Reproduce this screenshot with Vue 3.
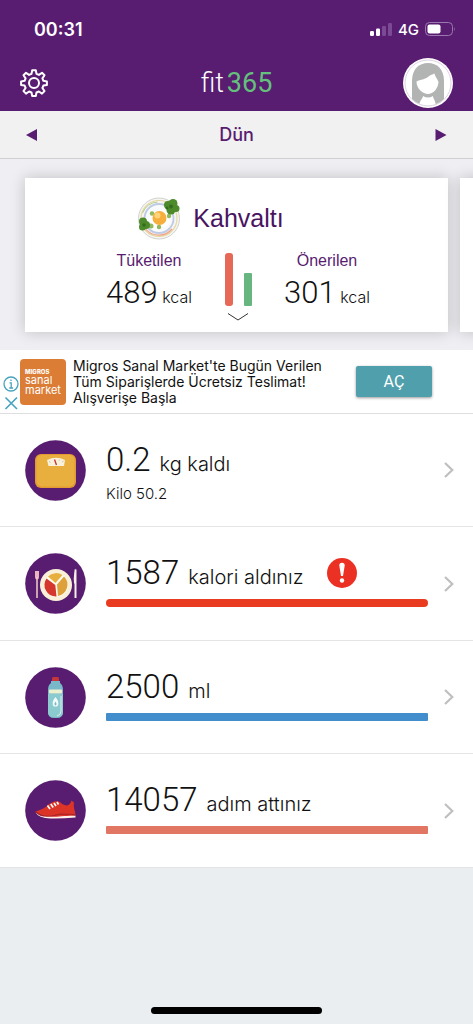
<script setup>
const meals = [
  { name: 'Kahvaltı', consumed: 489, suggested: 301 },
]

const rows = [
  { id: 'weight', value: '0.2', unit: 'kg kaldı', note: 'Kilo 50.2' },
  { id: 'calories', value: '1587', unit: 'kalori aldınız', alert: true, tone: 'red' },
  { id: 'water', value: '2500', unit: 'ml', tone: 'blue' },
  { id: 'steps', value: '14057', unit: 'adım attınız', tone: 'coral' },
]

const barHeight = (value) => Math.round((value / 489) * 53) + 'px'
</script>

<template>
  <div class="screen">
    <header class="top">
      <div class="status">
        <span class="clock">00:31</span>
        <div class="indicators">
          <svg width="22" height="13" viewBox="0 0 22 13" aria-hidden="true">
            <rect x="0" y="8" width="4" height="5" rx="1.2" fill="#fff" />
            <rect x="6" y="5.500" width="4" height="7.500" rx="1.200" fill="#fff" />
            <rect x="12" y="3" width="4" height="10" rx="1.200" fill="#7a4a94" />
            <rect x="18" y="0" width="4" height="13" rx="1.200" fill="#7a4a94" />
          </svg>
          <span class="network">4G</span>
          <svg width="31" height="14" viewBox="0 0 31 14" aria-hidden="true">
            <rect x="0.500" y="0.500" width="27" height="13" rx="4" fill="none" stroke="#9a78ad" />
            <rect x="2.500" y="2.500" width="13" height="9" rx="2" fill="#fff" />
            <path d="M29 5 Q30.600 7 29 9.200 Z" fill="#9a78ad" />
          </svg>
        </div>
      </div>
      <div class="nav">
        <button class="plain gear" aria-label="Ayarlar">
          <svg width="28" height="28" viewBox="0 0 28 28" fill="none" stroke="#fff" stroke-width="2" stroke-linejoin="round">
            <path d="M12.200 1.200h3.600l.7 3.700 2.400 1 3.100-2.100 2.500 2.500-2.100 3.100 1 2.400 3.500.6v3.500l-3.500.7-1 2.400 2.100 3.100-2.500 2.500-3.100-2.100-2.400 1-.7 3.500h-3.600l-.7-3.500-2.400-1L6 24.600 3.500 22.100 5.600 19l-1-2.400-3.500-.7v-3.500l3.500-.6 1-2.400-2.100-3.100L6 3.800l3.100 2.100 2.400-1z" />
            <circle cx="14" cy="14" r="5" />
          </svg>
        </button>
        <h1 class="logo">fit<span>365</span></h1>
        <button class="plain avatar" aria-label="Profil">
          <svg width="50" height="50" viewBox="0 0 50 50">
            <defs><clipPath id="face"><circle cx="25" cy="25" r="22.500" /></clipPath></defs>
            <circle cx="25" cy="25" r="25" fill="#fff" />
            <circle cx="25" cy="25" r="23" fill="#fff" stroke="#d4c6dc" stroke-width="0.800" />
            <g clip-path="url(#face)">
              <path d="M9 50V23C9 11 16 5 25 5s16 6 16 18v27z" fill="#b2b4b3" />
              <path d="M13.500 23.500c4-2 9-2 12-5 2-1.500 4-2 6-3 .5 3 2.500 5 4 8.500C35 31 30 36 25 36s-11.500-5-11.500-12.500z" fill="#fff" />
              <path d="M20 38q5 3 10 0c0 3 3 4 3 12H16c0-8 4-9 4-12z" fill="#fff" />
            </g>
          </svg>
        </button>
      </div>
    </header>

    <div class="day">
      <button class="plain arrow" aria-label="Önceki gün">
        <svg width="12" height="14" viewBox="0 0 12 14"><path d="M0 7 11 1v12z" fill="#581c70" /></svg>
      </button>
      <h2>Dün</h2>
      <button class="plain arrow" aria-label="Sonraki gün">
        <svg width="12" height="14" viewBox="0 0 12 14"><path d="M11.500 7 .5 1v12z" fill="#581c70" /></svg>
      </button>
    </div>

    <section class="meals">
      <article v-for="meal in meals" :key="meal.name" class="card">
        <div class="meal-title">
          <svg width="44" height="44" viewBox="0 0 44 44" aria-hidden="true">
            <circle cx="22" cy="22.500" r="20.500" fill="#f5f5f2" stroke="#d2d3d1" />
            <circle cx="22" cy="22.500" r="18" fill="none" stroke="#e8d8a4" stroke-width="1.200" />
            <path d="M8 32a17 17 0 0 0 27 1" fill="none" stroke="#efa184" stroke-width="1.200" />
            <path d="M5.500 17a18 18 0 0 1 15-11" fill="none" stroke="#b3cf91" />
            <circle cx="22" cy="22.500" r="14.500" fill="#f9fafb" stroke="#bfcbe4" stroke-width="1.800" />
            <path d="M14 19c3-5 6-1 9-4s8 0 8 5 4 5 0 9-7 0-10 4-6 0-8-3-3-6 1-11z" fill="#fff" />
            <g fill="#8fb95c"><circle cx="15" cy="17.500" r="2.200" /><circle cx="14" cy="30" r="2.500" /><circle cx="22" cy="31" r="2.200" /><circle cx="32" cy="20" r="2.200" /></g>
            <circle cx="22.500" cy="22" r="7" fill="#f6ae3d" />
            <circle cx="20.500" cy="19.500" r="3" fill="#ffd37b" />
            <g fill="#4c8a2b"><circle cx="31" cy="9" r="4" /><circle cx="36" cy="7.500" r="4.500" /><circle cx="39" cy="12.500" r="3.500" /><circle cx="34" cy="14" r="4.500" /><circle cx="6" cy="25.500" r="4" /><circle cx="9" cy="29" r="4" /><circle cx="5.500" cy="31" r="3.500" /></g>
            <g fill="#326d1d"><circle cx="34" cy="10.500" r="2" /><circle cx="30" cy="12" r="1.500" /><circle cx="7" cy="29" r="1.800" /></g>
          </svg>
          <h3>{{ meal.name }}</h3>
        </div>
        <div class="compare">
          <div class="figure">
            <span class="label">Tüketilen</span>
            <p><b>{{ meal.consumed }}</b> kcal</p>
          </div>
          <div class="middle">
            <div class="bars" aria-hidden="true">
              <i class="eaten" :style="{ height: barHeight(meal.consumed) }"></i>
              <i class="advised" :style="{ height: barHeight(meal.suggested) }"></i>
            </div>
            <button class="plain" aria-label="Detaylar">
              <svg width="22" height="8" viewBox="0 0 22 8" fill="none" stroke="#333"><path d="M1 .5 11 7 21 .5" /></svg>
            </button>
          </div>
          <div class="figure">
            <span class="label">Önerilen</span>
            <p><b>{{ meal.suggested }}</b> kcal</p>
          </div>
        </div>
      </article>
      <article class="card"></article>
    </section>

    <aside class="ad">
      <div class="ad-marks">
        <button class="plain" aria-label="Reklam bilgisi">
          <svg width="16" height="16" viewBox="0 0 16 16" fill="none" stroke="#46a3bd" stroke-width="1.300"><circle cx="8" cy="8" r="7" /><path d="M6.500 6.800H8.200V12M6.300 12h3.800M8 3.500v1.600" /></svg>
        </button>
        <button class="plain" aria-label="Reklamı kapat">
          <svg width="16" height="14" viewBox="0 0 16 14" fill="none" stroke="#46a3bd" stroke-width="1.600"><path d="M2.500 1.500 14 13M14 1.500 2.500 13" /></svg>
        </button>
      </div>
      <div class="brand"><strong>MIGROS</strong><span>sanal</span><span>market</span></div>
      <p class="ad-text">Migros Sanal Market'te Bugün Verilen<br>Tüm Siparişlerde Ücretsiz Teslimat!<br>Alışverişe Başla</p>
      <button class="open">AÇ</button>
    </aside>

    <main>
      <a v-for="row in rows" :key="row.id" class="row" href="#">
        <svg class="badge" width="61" height="61" viewBox="0 0 61 61" aria-hidden="true">
          <circle cx="30.500" cy="30.500" r="30.300" fill="#581c70" />
          <g v-if="row.id === 'weight'">
            <rect x="10" y="14" width="41" height="34" rx="6" fill="#e39a32" />
            <rect x="11.500" y="15" width="38" height="31.500" rx="5" fill="#e8ae3e" />
            <path d="M22 20q9-4.500 18 0l-1 6H23.500z" fill="#f8f1dc" />
            <path d="M29.500 19.500 31.500 25" stroke="#c63b31" stroke-width="1.400" />
            <path d="M24 21.500l1.500.8M37 22l1.500-.8M34 20.800l.4-1.300" stroke="#b9a789" stroke-width=".6" />
          </g>
          <g v-else-if="row.id === 'calories'">
            <circle cx="31" cy="32" r="16" fill="#f8f0d8" />
            <circle cx="31" cy="32" r="12" fill="#fffaf0" />
            <path d="M30.500 30 23 23.500a11.500 11.500 0 0 1 14.500-1.500z" fill="#e7ae40" />
            <path d="M32 31.500 39 23.500a11.500 11.500 0 0 1-6 19.500z" fill="#dda03b" />
            <path d="M30.300 32 31.500 43.500A11.500 11.500 0 0 1 21.500 25.500z" fill="#d5362d" />
            <path d="M10 18h4v6q0 2.500-2 2.500T10 24z" fill="#e9b7bd" />
            <path d="M12 24v21" stroke="#f2cfc6" stroke-width="1.500" />
            <path d="M50.500 16.500V45" stroke="#f8f0e8" stroke-width="2" />
            <path d="M51 15.500q-3 6-2 15h2z" fill="#f8f0e8" />
          </g>
          <g v-else-if="row.id === 'water'">
            <rect x="27" y="10" width="7" height="5" rx="1.500" fill="#c7373a" />
            <path d="M26 14h9v2q3 2 3 7v22q0 6-6 6h-3q-6 0-6-6V23q0-5 3-7z" fill="#79b8c8" />
            <path d="M23 27h15v18q0 5-6 5h-3q-6 0-6-5z" fill="#8bcbd0" />
            <rect x="24" y="22.500" width="13" height="4" rx="1" fill="#edf0cf" />
            <path d="M30.500 30q5 6 1.500 9.500h-3Q25.500 36 30.500 30z" fill="#f3fafa" />
            <path d="M30.500 34.500q2 3 0 4-2-1 0-4z" fill="#79b8c8" />
            <path d="M36 29v15q0 4-4 5" fill="none" stroke="#d8eeee" />
          </g>
          <g v-else>
            <path d="M10.500 31.500c5-1.500 10-3.500 13.500-7.500l5-2.500q4-.5 6 .5 2 3 6 3.500 4 0 5.500-5l2.500 2c-1 6 1.500 8 1.500 13l-10 1.200-15 .5q-11-.2-15-5.700z" fill="#dc3528" />
            <path d="M10.500 31.500q5 5.500 15 4.800l10-2.300 15 .5" fill="none" stroke="#a82427" stroke-width="1.200" />
            <path d="M10.500 32.500c4 4 9 4.700 14 4.200 7 .5 14-1.200 26-1v1.800q-14 1.200-25 .9-12-.4-15-5.900z" fill="#fff0e8" />
            <path d="M22.500 25.500l2.500 3.500M25.800 24l2.400 3.500M29 23l2 3M32 22l1.500 2.500" stroke="#fff" stroke-width="1.600" />
          </g>
        </svg>
        <div class="info">
          <div class="headline">
            <span class="value">{{ row.value }}</span>
            <span class="unit">{{ row.unit }}</span>
            <svg v-if="row.alert" class="alert" width="30" height="30" viewBox="0 0 30 30" role="img" aria-label="Uyarı">
              <circle cx="15" cy="15" r="15" fill="#ea3124" />
              <path d="M12.300 7.500q0-2.800 2.700-2.800t2.700 2.800L16 18h-2z" fill="#fff" />
              <circle cx="15" cy="22.500" r="2.200" fill="#fff" />
            </svg>
          </div>
          <span v-if="row.note" class="note">{{ row.note }}</span>
          <div v-else class="track" :class="row.tone"></div>
        </div>
        <svg class="chevron" width="10" height="16" viewBox="0 0 10 16" fill="none" stroke="#bfbfbf" stroke-width="2.200"><path d="M1 1 8.300 8 1 15" /></svg>
      </a>
    </main>

    <footer class="home"><i></i></footer>
  </div>
</template>

<style>
body {
  margin: 0;
  background: #ebeef0;
}
</style>

<style scoped>
.screen {
  display: flex;
  flex-direction: column;
  min-height: 100vh;
  background: #ebeef0;
  color: #111;
  font-family: Inter, "Liberation Sans", sans-serif;
}

h1, h2, h3, p {
  margin: 0;
  font-weight: 400;
}

.plain {
  display: flex;
  padding: 0;
  border: 0;
  background: none;
}

svg {
  display: block;
  flex: none;
}

.top {
  background: #581c70;
  color: #fff;
}

.status {
  display: flex;
  align-items: center;
  justify-content: space-between;
  box-sizing: border-box;
  height: 55px;
  padding: 3px 17px 0 34px;
}

.clock {
  font-size: 18px;
  font-weight: 600;
}

.indicators {
  display: flex;
  align-items: center;
  gap: 6px;
}

.network {
  font-size: 15px;
  font-weight: 500;
}

.nav {
  display: grid;
  grid-template-columns: 1fr auto 1fr;
  align-items: center;
  height: 56px;
  padding: 0 20px;
}

.avatar {
  justify-self: end;
}

.logo {
  display: flex;
  gap: 3px;
  font-family: Roboto, sans-serif;
  font-size: 27px;
  font-weight: 300;
  line-height: 36px;
}

.logo span {
  color: #64c07c;
  font-weight: 400;
}

.day {
  display: flex;
  align-items: center;
  justify-content: space-between;
  height: 47px;
  padding: 0 26px;
  border-bottom: 1px solid #cfcfd2;
  background: #f1f1f1;
}

.day h2 {
  color: #581c70;
  font-size: 18px;
  font-weight: 500;
}

.meals {
  display: flex;
  gap: 12px;
  padding: 19px 25px 18px;
  overflow: hidden;
  background: #efeff3;
}

.card {
  flex: 0 0 100%;
  display: flex;
  flex-direction: column;
  align-items: center;
  box-sizing: border-box;
  min-height: 154px;
  padding-top: 18px;
  background: #fff;
  box-shadow: 0 0 14px rgba(0, 0, 0, 0.2);
}

.meal-title {
  display: flex;
  align-items: center;
  gap: 12px;
  margin-right: 52px;
}

.meal-title h3 {
  color: #48145f;
  font-family: "Liberation Sans", sans-serif;
  font-size: 25px;
}

.compare {
  display: grid;
  grid-template-columns: 110px 28px 110px;
  justify-content: center;
  column-gap: 20px;
  margin-top: 12px;
  padding-left: 3px;
}

.figure {
  display: flex;
  flex-direction: column;
  align-items: center;
  white-space: nowrap;
}

.label {
  color: #581c70;
  font-family: "Liberation Sans", sans-serif;
  font-size: 16px;
  line-height: 18px;
}

.figure p {
  font-size: 16px;
  font-weight: 300;
  line-height: 46px;
}

.figure b {
  font-family: Roboto, sans-serif;
  font-size: 31px;
  font-weight: 300;
}

.middle {
  display: flex;
  flex-direction: column;
  align-items: center;
  gap: 7px;
}

.bars {
  display: flex;
  align-items: flex-end;
  gap: 11px;
  height: 54px;
}

.bars i {
  width: 8px;
}

.eaten {
  border-radius: 3px;
  background: #e66957;
}

.advised {
  border-radius: 1px;
  background: #67b680;
}

.ad {
  display: flex;
  align-items: center;
  height: 63px;
  padding: 0 41px 0 3px;
  border-bottom: 1px solid #dedee0;
  background: #fff;
}

.ad-marks {
  display: flex;
  flex-direction: column;
  gap: 4px;
  align-self: flex-end;
  padding-bottom: 3px;
}

.brand {
  display: flex;
  flex: none;
  flex-direction: column;
  justify-content: center;
  box-sizing: border-box;
  width: 46px;
  height: 46px;
  margin-left: 1px;
  padding-left: 5px;
  border-radius: 4px;
  background: #dc7d36;
  color: #fff;
  font-size: 11px;
  line-height: 10px;
}

.brand strong {
  font-size: 6px;
  font-weight: 800;
  line-height: 7px;
}

.ad-text {
  margin-left: 7px;
  font-size: 14px;
  line-height: 16px;
  white-space: nowrap;
}

.open {
  width: 76px;
  height: 31px;
  margin-left: auto;
  padding: 0;
  border: 0;
  border-radius: 2px;
  background: #509fad;
  box-shadow: 0 1px 3px rgba(0, 0, 0, 0.4);
  color: #fff;
  font-family: Roboto, sans-serif;
  font-size: 16px;
}

.row {
  display: flex;
  align-items: center;
  box-sizing: border-box;
  min-height: 113px;
  padding: 0 19px 0 25px;
  border-bottom: 1px solid #e4e4e6;
  background: #fff;
  color: inherit;
  text-decoration: none;
}

.row:nth-child(even) {
  min-height: 114px;
}

.info {
  flex: 1;
  align-self: flex-start;
  margin: 0 16px 0 20px;
  padding-top: 26px;
}

.headline {
  display: flex;
  align-items: baseline;
  gap: 9px;
  height: 40px;
  line-height: 40px;
}

.value {
  font-family: Roboto, sans-serif;
  font-size: 33px;
  font-weight: 300;
}

.unit {
  font-size: 20px;
  font-weight: 300;
}

.alert {
  align-self: center;
  margin-left: 14px;
}

.note {
  display: block;
  margin-top: 4px;
  font-size: 15px;
  font-weight: 300;
  line-height: 20px;
}

.track {
  height: 8px;
  margin-top: 6px;
  border-radius: 1px;
}

.red {
  border-radius: 4px;
  background: #e83b20;
}

.blue {
  background: #428dcb;
}

.coral {
  background: #e17762;
}

.home {
  display: flex;
  justify-content: center;
  margin-top: auto;
  padding-bottom: 10px;
}

.home i {
  width: 36%;
  height: 7px;
  border-radius: 4px;
  background: #000;
}
</style>
